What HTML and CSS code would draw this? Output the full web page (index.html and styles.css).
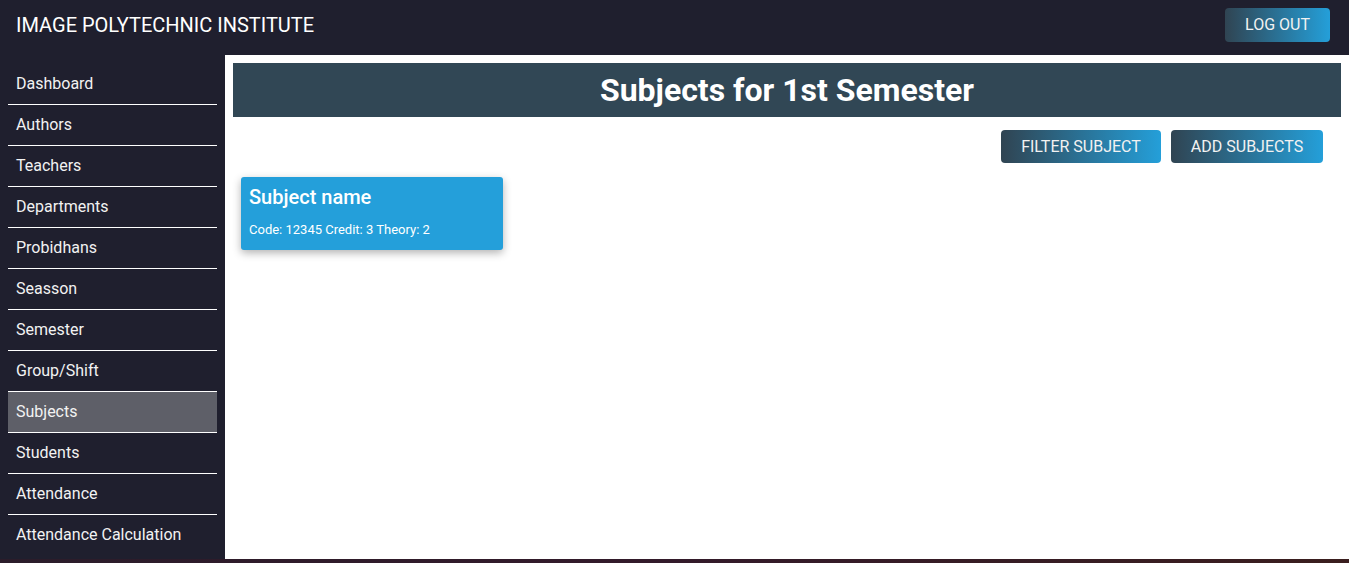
FILE: index.html
```html
<!DOCTYPE html>
<html>
<head>
<meta charset="utf-8">
<link rel="stylesheet" href="styles.css">
</head>
<body>
<div class="app">
  <header class="topbar">
    <div class="brand">IMAGE POLYTECHNIC INSTITUTE</div>
    <button class="btn grad logout">LOG OUT</button>
  </header>
  <div class="body">
    <nav class="sidebar">
      <a class="nav-item">Dashboard</a>
      <a class="nav-item">Authors</a>
      <a class="nav-item">Teachers</a>
      <a class="nav-item">Departments</a>
      <a class="nav-item">Probidhans</a>
      <a class="nav-item">Seasson</a>
      <a class="nav-item">Semester</a>
      <a class="nav-item">Group/Shift</a>
      <a class="nav-item active">Subjects</a>
      <a class="nav-item">Students</a>
      <a class="nav-item">Attendance</a>
      <a class="nav-item last">Attendance Calculation</a>
    </nav>
    <main class="main">
      <h1 class="page-title">Subjects for 1st Semester</h1>
      <div class="actions">
        <button class="btn grad filter">FILTER SUBJECT</button>
        <button class="btn grad add">ADD SUBJECTS</button>
      </div>
      <div class="cards">
        <div class="card">
          <div class="card-title">Subject name</div>
          <div class="card-meta">Code: 12345 Credit: 3 Theory: 2</div>
        </div>
      </div>
    </main>
  </div>
  <div class="footer-strip"></div>
</div>
</body>
</html>
```

FILE: styles.css
```css
* { box-sizing: border-box; }
html, body { margin: 0; padding: 0; }
body {
  font-family: Roboto, "Liberation Sans", sans-serif;
  background: #1f1f2e;
  color: #fff;
  height: 563px;
  overflow: hidden;
}
.app { display: flex; flex-direction: column; height: 563px; }
.topbar {
  height: 55px;
  display: flex;
  align-items: center;
  justify-content: space-between;
  padding: 0 19px 0 16px;
  background: #1f1f2e;
}
.brand { font-size: 20px; color: #fff; margin-top: -6px; }
.btn {
  border: none;
  color: #f2f2f2;
  font-family: Roboto, "Liberation Sans", sans-serif;
  font-size: 16px;
  border-radius: 4px;
  cursor: pointer;
  padding: 0;
}
.grad { background: linear-gradient(to right, #304452, #249fd9); }
.logout { width: 105px; height: 34px; margin-top: -6px; }
.body { flex: 1; display: flex; min-height: 0; }
.sidebar {
  width: 225px;
  padding: 9px 8px 0 8px;
  background: #1f1f2e;
  display: flex;
  flex-direction: column;
}
.nav-item {
  display: flex;
  align-items: center;
  height: 41px;
  padding: 0 8px 1px 8px;
  font-size: 16px;
  color: #f2f2f2;
  border-bottom: 1px solid #ffffff;
  flex-shrink: 0;
}
.nav-item.active { background: #5e5f68; }
.nav-item.last { border-bottom: none; padding-bottom: 2px; }
.main {
  flex: 1;
  background: #fff;
  padding: 8px 8px 0 8px;
}
.page-title {
  margin: 0;
  height: 54px;
  background: #314755;
  color: #fff;
  font-size: 32px;
  font-weight: 700;
  display: flex;
  align-items: center;
  justify-content: center;
}
.actions {
  display: flex;
  justify-content: flex-end;
  gap: 10px;
  padding: 13px 18px 0 0;
}
.actions .btn { height: 33px; }
.filter { width: 160px; }
.add { width: 152px; }
.cards { display: flex; padding: 14px 0 0 8px; }
.card {
  width: 262px;
  height: 73px;
  background: #249fda;
  border-radius: 3px;
  box-shadow: 0 3px 8px rgba(0,0,0,0.3);
  padding: 8px 8px;
  color: #fff;
}
.card-title { font-size: 20px; font-weight: 500; line-height: 24px; }
.card-meta { font-size: 13px; margin-top: 13px; line-height: 15px; }
.footer-strip {
  height: 4px;
  flex-shrink: 0;
  background: linear-gradient(to right, #2b1c2a, #331a2a 50%, #3a1e1e);
}
```
